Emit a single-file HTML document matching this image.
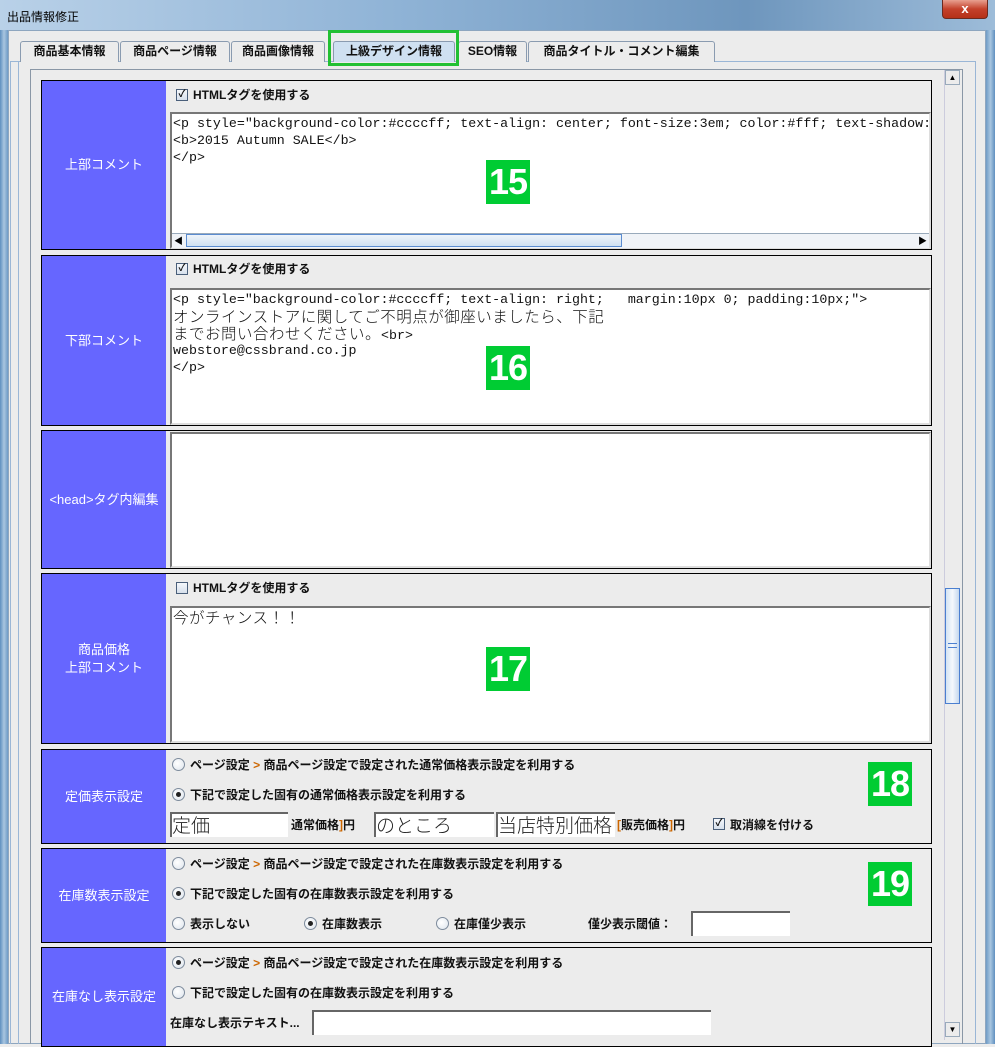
<!DOCTYPE html>
<html><head><meta charset="utf-8"><style>
*{box-sizing:border-box;margin:0;padding:0}
body{width:995px;height:1044px;overflow:hidden;background:#ececec;font-family:"Liberation Sans","Noto Sans CJK JP",sans-serif;position:relative}
.a{position:absolute}
.title{left:0;top:0;width:995px;height:34px;background:linear-gradient(90deg,#b9d1e8,#8fb3d6 40%,#6e96bd 75%,#9dbcd9);}
.frameL{left:0;top:30px;width:8px;height:1014px;background:linear-gradient(90deg,#5f8fbf,#a9c6e0,#6f9bc6)}
.frameR{left:986px;top:30px;width:9px;height:1014px;background:linear-gradient(90deg,#6f9bc6,#a9c6e0,#5f8fbf)}
.tab{top:41px;height:21px;border:1px solid #8a9bb0;border-bottom:none;background:#ececec;font-size:12px;font-weight:bold;line-height:19px;text-align:center;color:#111;border-radius:3px 3px 0 0}
.lbl{left:41px;width:126px;background:#6666ff;border:1px solid #000;color:#fff;font-size:13px;display:flex;align-items:center;justify-content:center;text-align:center;line-height:18px}
.cnt{left:166px;width:766px;border:1px solid #000;border-left:none;background:#ececec}
.ta{background:#fff;border:2px solid #777;border-right-color:#ddd;border-bottom-color:#ddd;font-family:"Liberation Mono","Noto Sans CJK JP",monospace;font-size:13.3px;color:#111;padding:1px 0 0 1px;white-space:pre;overflow:hidden}
.ta div{height:17px;line-height:17px;overflow:visible}
.ta .j{font-family:"Noto Sans CJK JP",sans-serif;font-size:15.5px;font-weight:300;letter-spacing:0.5px}
.badge{width:44px;height:44px;background:#00cc33;color:#fff;font:bold 36px/44px "Liberation Sans",sans-serif;text-align:center;letter-spacing:-1px}
.t{font-size:12px;font-weight:bold;color:#111;white-space:nowrap;line-height:14px}
.cb{width:12px;height:12px;border:1px solid #4a5f7a;background:linear-gradient(#f4f7fb,#d6e0ec);font-size:10px;line-height:10px;text-align:center;color:#111;font-weight:bold}
.rd{width:13px;height:13px;border:1px solid #7d8b9c;border-radius:50%;background:radial-gradient(circle at 40% 40%,#fff,#dde4ec)}
.rd.on::after{content:"";position:absolute;left:3px;top:3px;width:5px;height:5px;border-radius:50%;background:#222}
.in{background:#fff;border-top:2px solid #666;border-left:2px solid #666;font-size:19px;line-height:22px;font-weight:300;color:#222;overflow:hidden;white-space:nowrap;font-family:"Noto Sans CJK JP",sans-serif}
.o{color:#c60}
</style></head><body>
<div class="a title"></div>
<div class="a" style="left:7px;top:8px;font-size:12px;color:#000">出品情報修正</div>
<div class="a" style="left:942px;top:0;width:46px;height:19px;background:linear-gradient(#e8a090,#c4412b 50%,#b53018);border:1px solid #6b2a20;border-top:none;border-radius:0 0 4px 4px;color:#fff;font:bold 13px/17px 'Liberation Sans';text-align:center">x</div>
<div class="a frameL"></div><div class="a frameR"></div>
<div class="a" style="left:8px;top:30px;width:978px;height:1014px;background:#ececec;border:1px solid #8ea6bf"></div>
<div class="a" style="left:10px;top:61px;width:966px;height:983px;border:1px solid #9ab6d6;border-bottom:none"></div>
<div class="a" style="left:18px;top:62px;width:1px;height:982px;background:#9ab6d6"></div>
<div class="a tab" style="left:20px;width:99px">商品基本情報</div>
<div class="a tab" style="left:120px;width:110px">商品ページ情報</div>
<div class="a tab" style="left:231px;width:94px">商品画像情報</div>
<div class="a tab" style="left:333px;width:122px;background:#cfe0f1">上級デザイン情報</div>
<div class="a tab" style="left:458px;width:69px">SEO情報</div>
<div class="a tab" style="left:528px;width:187px">商品タイトル・コメント編集</div>
<div class="a" style="left:328px;top:30px;width:131px;height:36px;border:3px solid #22c033"></div>
<div class="a" style="left:30px;top:69px;width:933px;height:975px;border:1px solid #8a97a6;border-bottom:none"></div>
<!-- scrollbar -->
<div class="a" style="left:944px;top:70px;width:17px;height:970px;background:#ececec;border-left:1px solid #ccd"></div>
<div class="a" style="left:945px;top:70px;width:15px;height:15px;border:1px solid #9ab;font-size:8px;text-align:center;line-height:13px">▲</div>
<div class="a" style="left:945px;top:1022px;width:15px;height:15px;border:1px solid #9ab;font-size:8px;text-align:center;line-height:13px">▼</div>
<div class="a" style="left:945px;top:588px;width:15px;height:116px;border:1px solid #4a7fd0;background:linear-gradient(90deg,#d4e4f4,#f4f8fc,#c4d8ee)"></div>
<div class="a" style="left:948px;top:643px;width:9px;height:5px;border-top:1px solid #4a7fd0;border-bottom:1px solid #4a7fd0"></div>

<!-- section 1 -->
<div class="a lbl" style="top:80px;height:170px">上部コメント</div>
<div class="a cnt" style="top:80px;height:170px"></div>
<div class="a cb" style="left:176px;top:89px">✓</div><div class="a t" style="left:193px;top:88px">HTMLタグを使用する</div>
<div class="a ta" style="left:170px;top:112px;width:761px;height:137px"><div>&lt;p style="background-color:#ccccff; text-align: center; font-size:3em; color:#fff; text-shadow:</div><div>&lt;b&gt;2015 Autumn SALE&lt;/b&gt;</div><div>&lt;/p&gt;</div></div>
<div class="a" style="left:172px;top:233px;width:757px;height:15px;background:#f0f3f7;border-top:1px solid #9ab"></div>
<div class="a" style="left:186px;top:234px;width:436px;height:13px;background:linear-gradient(#eef4fa,#cfe0f1);border:1px solid #5b8cd0"></div>
<div class="a" style="left:174px;top:234px;font-size:9px">◀</div><div class="a" style="left:918px;top:234px;font-size:9px">▶</div>
<div class="a badge" style="left:486px;top:160px">15</div>

<!-- section 2 -->
<div class="a lbl" style="top:255px;height:171px">下部コメント</div>
<div class="a cnt" style="top:255px;height:171px"></div>
<div class="a cb" style="left:176px;top:263px">✓</div><div class="a t" style="left:193px;top:262px">HTMLタグを使用する</div>
<div class="a ta" style="left:170px;top:288px;width:761px;height:137px"><div>&lt;p style="background-color:#ccccff; text-align: right;   margin:10px 0; padding:10px;"&gt;</div><div class="j">オンラインストアに関してご不明点が御座いましたら、下記</div><div><span class="j">までお問い合わせください。</span>&lt;br&gt;</div><div>webstore@cssbrand.co.jp</div><div>&lt;/p&gt;</div></div>
<div class="a badge" style="left:486px;top:346px">16</div>

<!-- section 3 -->
<div class="a lbl" style="top:430px;height:139px">&lt;head&gt;タグ内編集</div>
<div class="a cnt" style="top:430px;height:139px"></div>
<div class="a ta" style="left:170px;top:432px;width:761px;height:136px"></div>

<!-- section 4 -->
<div class="a lbl" style="top:573px;height:171px">商品価格<br>上部コメント</div>
<div class="a cnt" style="top:573px;height:171px"></div>
<div class="a cb" style="left:176px;top:582px"></div><div class="a t" style="left:193px;top:581px">HTMLタグを使用する</div>
<div class="a ta" style="left:170px;top:606px;width:761px;height:137px"><div class="j">今がチャンス！！</div></div>
<div class="a badge" style="left:486px;top:647px">17</div>

<!-- section 5 -->
<div class="a lbl" style="top:749px;height:95px">定価表示設定</div>
<div class="a cnt" style="top:749px;height:95px"></div>
<div class="a rd" style="left:172px;top:758px"></div><div class="a t" style="left:190px;top:758px">ページ設定 <span class="o">&gt;</span> 商品ページ設定で設定された通常価格表示設定を利用する</div>
<div class="a rd on" style="left:172px;top:788px"></div><div class="a t" style="left:190px;top:788px">下記で設定した固有の通常価格表示設定を利用する</div>
<div class="a in" style="left:170px;top:812px;width:118px;height:25px">定価</div>
<div class="a t" style="left:291px;top:818px">通常価格<span class="o">]</span>円</div>
<div class="a in" style="left:374px;top:812px;width:120px;height:25px">のところ</div>
<div class="a in" style="left:496px;top:812px;width:119px;height:25px">当店特別価格</div>
<div class="a t" style="left:617px;top:818px"><span class="o">[</span>販売価格<span class="o">]</span>円</div>
<div class="a cb" style="left:713px;top:818px">✓</div><div class="a t" style="left:730px;top:818px">取消線を付ける</div>
<div class="a badge" style="left:868px;top:762px">18</div>

<!-- section 6 -->
<div class="a lbl" style="top:848px;height:95px">在庫数表示設定</div>
<div class="a cnt" style="top:848px;height:95px"></div>
<div class="a rd" style="left:172px;top:857px"></div><div class="a t" style="left:190px;top:857px">ページ設定 <span class="o">&gt;</span> 商品ページ設定で設定された在庫数表示設定を利用する</div>
<div class="a rd on" style="left:172px;top:887px"></div><div class="a t" style="left:190px;top:887px">下記で設定した固有の在庫数表示設定を利用する</div>
<div class="a rd" style="left:172px;top:917px"></div><div class="a t" style="left:190px;top:917px">表示しない</div>
<div class="a rd on" style="left:304px;top:917px"></div><div class="a t" style="left:322px;top:917px">在庫数表示</div>
<div class="a rd" style="left:436px;top:917px"></div><div class="a t" style="left:454px;top:917px">在庫僅少表示</div>
<div class="a t" style="left:588px;top:917px">僅少表示閾値：</div>
<div class="a in" style="left:691px;top:911px;width:99px;height:25px"></div>
<div class="a badge" style="left:868px;top:862px">19</div>

<!-- section 7 -->
<div class="a lbl" style="top:947px;height:100px">在庫なし表示設定</div>
<div class="a cnt" style="top:947px;height:100px"></div>
<div class="a rd on" style="left:172px;top:956px"></div><div class="a t" style="left:190px;top:956px">ページ設定 <span class="o">&gt;</span> 商品ページ設定で設定された在庫数表示設定を利用する</div>
<div class="a rd" style="left:172px;top:986px"></div><div class="a t" style="left:190px;top:986px">下記で設定した固有の在庫数表示設定を利用する</div>
<div class="a t" style="left:170px;top:1016px">在庫なし表示テキスト...</div>
<div class="a in" style="left:312px;top:1010px;width:399px;height:25px"></div>
</body></html>
